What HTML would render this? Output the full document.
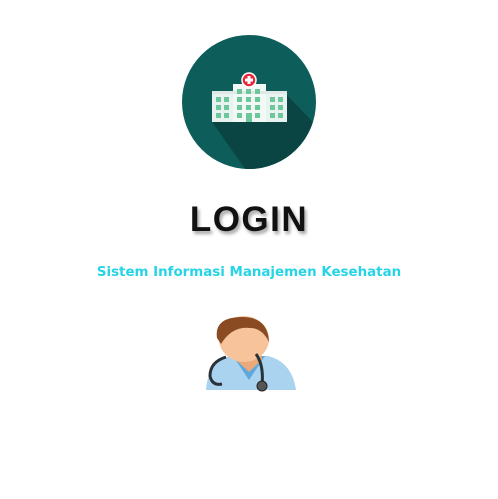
<!DOCTYPE html>
<html><head><style>
body{margin:0;width:498px;height:499px;background:#fff;position:relative;overflow:hidden;font-family:"Liberation Sans",sans-serif}
.t{position:absolute;left:0;width:498px;text-align:center}
</style></head><body>
<svg width="498" height="499" style="position:absolute;left:0;top:0">
<defs><clipPath id="c"><circle cx="249" cy="102" r="67"/></clipPath></defs>
<circle cx="249" cy="102" r="67" fill="#0d5e5b"/>
<polygon clip-path="url(#c)" points="212,122 287,122 287,95 330,140 330,190 260,190" fill="#0a4543"/>
<rect x="212" y="93" width="75" height="29" fill="#e8f2ee"/>
<rect x="233" y="84" width="33" height="38" fill="#f2f8f5"/>
<rect x="212" y="91" width="75" height="3" fill="#dfe8e4"/>
<g fill="#6cc79a">
<rect x="216" y="97" width="5" height="5"/><rect x="224" y="97" width="5" height="5"/>
<rect x="216" y="105" width="5" height="5"/><rect x="224" y="105" width="5" height="5"/>
<rect x="216" y="113" width="5" height="5"/><rect x="224" y="113" width="5" height="5"/>
<rect x="270" y="97" width="5" height="5"/><rect x="278" y="97" width="5" height="5"/>
<rect x="270" y="105" width="5" height="5"/><rect x="278" y="105" width="5" height="5"/>
<rect x="270" y="113" width="5" height="5"/><rect x="278" y="113" width="5" height="5"/>
<rect x="237" y="89" width="5" height="5"/><rect x="246" y="89" width="5" height="5"/><rect x="255" y="89" width="5" height="5"/>
<rect x="237" y="97" width="5" height="5"/><rect x="246" y="97" width="5" height="5"/><rect x="255" y="97" width="5" height="5"/>
<rect x="237" y="105" width="5" height="5"/><rect x="246" y="105" width="5" height="5"/><rect x="255" y="105" width="5" height="5"/>
<rect x="237" y="113" width="5" height="5"/><rect x="255" y="113" width="5" height="5"/>
<rect x="246" y="113" width="6" height="9"/>
</g>
<circle cx="249" cy="80" r="7" fill="#e8283a" stroke="#fff" stroke-width="1.5"/>
<rect x="247.5" y="76" width="3" height="8" fill="#fff"/><rect x="245" y="78.5" width="8" height="3" fill="#fff"/>
<path d="M206 390 Q208 362 230 356 L268 356 Q292 362 296 390 Z" fill="#a9d3ef"/>
<path d="M233 356 L249 380 L265 356 Z" fill="#5fa8dd"/>
<path d="M237 350 L261 350 L262 360 L249 372 L236 360 Z" fill="#e9a978"/>
<ellipse cx="244" cy="339" rx="25" ry="23" fill="#f6c39a"/>
<path d="M217 338 Q214 318 240 317 Q268 316 269 342 Q262 328 250 328 Q232 326 221 344 Z" fill="#8a4a22"/>
<path d="M226 357 Q210 362 210 376 Q212 386 222 384" stroke="#2b3138" stroke-width="3" fill="none"/>
<path d="M256 354 Q264 365 262 385" stroke="#2b3138" stroke-width="3" fill="none"/>
<circle cx="262" cy="386" r="5" fill="#555" stroke="#222"/>
</svg>
<div class="t" style="top:200px;font-size:35px;font-weight:900;letter-spacing:1.5px;color:#111;text-shadow:2px 3px 3px rgba(0,0,0,.35)">LOGIN</div>
<div class="t" style="top:265px;font-size:13.4px;font-weight:bold;color:#26d4e6;font-family:'Comic Sans MS','DejaVu Sans',sans-serif">Sistem Informasi Manajemen Kesehatan</div>
</body></html>
